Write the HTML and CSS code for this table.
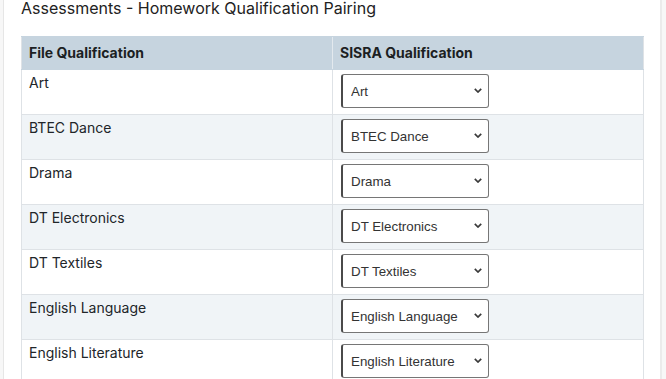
FILE: index.html
```html
<!DOCTYPE html>
<html>
<head>
<meta charset="utf-8">
<link rel="stylesheet" href="styles.css">
</head>
<body>
<div class="page">
  <div class="gutter-left"></div>
  <main class="main">
    <h1 class="title">Assessments - Homework Qualification Pairing</h1>
    <table class="pair-table">
      <thead>
        <tr><th class="col-file">File Qualification</th><th class="col-sisra">SISRA Qualification</th></tr>
      </thead>
      <tbody>
        <tr><td class="col-file">Art</td><td class="col-sisra"><div class="select-wrap"><select class="qual-select"><option>Art</option></select><svg class="chev" width="8" height="5" viewBox="0 0 8 5"><path d="M0.8 0.8 L4 4 L7.2 0.8" fill="none" stroke="#3a3a3a" stroke-width="1.7"/></svg></div></td></tr>
        <tr><td class="col-file">BTEC Dance</td><td class="col-sisra"><div class="select-wrap"><select class="qual-select"><option>BTEC Dance</option></select><svg class="chev" width="8" height="5" viewBox="0 0 8 5"><path d="M0.8 0.8 L4 4 L7.2 0.8" fill="none" stroke="#3a3a3a" stroke-width="1.7"/></svg></div></td></tr>
        <tr><td class="col-file">Drama</td><td class="col-sisra"><div class="select-wrap"><select class="qual-select"><option>Drama</option></select><svg class="chev" width="8" height="5" viewBox="0 0 8 5"><path d="M0.8 0.8 L4 4 L7.2 0.8" fill="none" stroke="#3a3a3a" stroke-width="1.7"/></svg></div></td></tr>
        <tr><td class="col-file">DT Electronics</td><td class="col-sisra"><div class="select-wrap"><select class="qual-select"><option>DT Electronics</option></select><svg class="chev" width="8" height="5" viewBox="0 0 8 5"><path d="M0.8 0.8 L4 4 L7.2 0.8" fill="none" stroke="#3a3a3a" stroke-width="1.7"/></svg></div></td></tr>
        <tr><td class="col-file">DT Textiles</td><td class="col-sisra"><div class="select-wrap"><select class="qual-select"><option>DT Textiles</option></select><svg class="chev" width="8" height="5" viewBox="0 0 8 5"><path d="M0.8 0.8 L4 4 L7.2 0.8" fill="none" stroke="#3a3a3a" stroke-width="1.7"/></svg></div></td></tr>
        <tr><td class="col-file">English Language</td><td class="col-sisra"><div class="select-wrap"><select class="qual-select"><option>English Language</option></select><svg class="chev" width="8" height="5" viewBox="0 0 8 5"><path d="M0.8 0.8 L4 4 L7.2 0.8" fill="none" stroke="#3a3a3a" stroke-width="1.7"/></svg></div></td></tr>
        <tr><td class="col-file">English Literature</td><td class="col-sisra"><div class="select-wrap"><select class="qual-select"><option>English Literature</option></select><svg class="chev" width="8" height="5" viewBox="0 0 8 5"><path d="M0.8 0.8 L4 4 L7.2 0.8" fill="none" stroke="#3a3a3a" stroke-width="1.7"/></svg></div></td></tr>
      </tbody>
    </table>
  </main>
  <div class="gutter-right"></div>
</div>
</body>
</html>
```
FILE: styles.css
```css
html, body {
  margin: 0;
  padding: 0;
  background: #ffffff;
  overflow: hidden;
}
body {
  font-family: Inter, "Liberation Sans", sans-serif;
  color: #212529;
}
.page {
  display: flex;
  min-height: 379px;
}
.gutter-left {
  width: 3px;
  background: #f7f7f7;
  border-right: 1px solid #e6e6e6;
}
.gutter-right {
  width: 4px;
  background: #f7f7f7;
  border-left: 2px solid #ebebeb;
}
.main {
  flex: 1;
  padding: 0 16px 0 17px;
}
.title {
  margin: 0 0 19px 0;
  font-size: 16px;
  line-height: 17px;
  font-weight: 400;
  color: #222222;
}
.pair-table {
  width: 100%;
  border-collapse: collapse;
  border: 1px solid #dee2e6;
  font-size: 14px;
}
.pair-table thead th {
  background: #c6d4df;
  text-align: left;
  font-weight: 700;
  line-height: 20px;
  padding: 6px 7px;
  border-top: 1px solid #c6d4df;
  border-bottom: 1px solid #c6d4df;
  color: #1c1f23;
}
.pair-table th.col-sisra {
  border-left: 1px solid #e3e9ee;
}
.pair-table td {
  vertical-align: top;
  line-height: 17px;
  padding: 4px 7px 6px 7px;
  border-bottom: 1px solid #dee2e6;
  height: 34px;
}
.pair-table .col-file {
  width: 296px;
}
.pair-table td.col-sisra {
  border-left: 1px solid #dee2e6;
  padding-left: 8px;
}
.pair-table tbody tr:nth-child(even) td {
  background: #f0f4f7;
}
.select-wrap {
  position: relative;
  width: 148px;
  height: 34px;
}
.qual-select {
  display: block;
  appearance: none;
  -webkit-appearance: none;
  width: 148px;
  height: 34px;
  font-family: "Liberation Sans", Arial, sans-serif;
  font-size: 13.33px;
  color: #333333;
  background: #ffffff;
  border: 1px solid #767676;
  border-left: 2px solid #4a4a4a;
  border-radius: 3px;
  padding: 0 20px 0 8px;
  margin: 0;
}
.chev {
  position: absolute;
  right: 7px;
  top: 14px;
  pointer-events: none;
}
```
